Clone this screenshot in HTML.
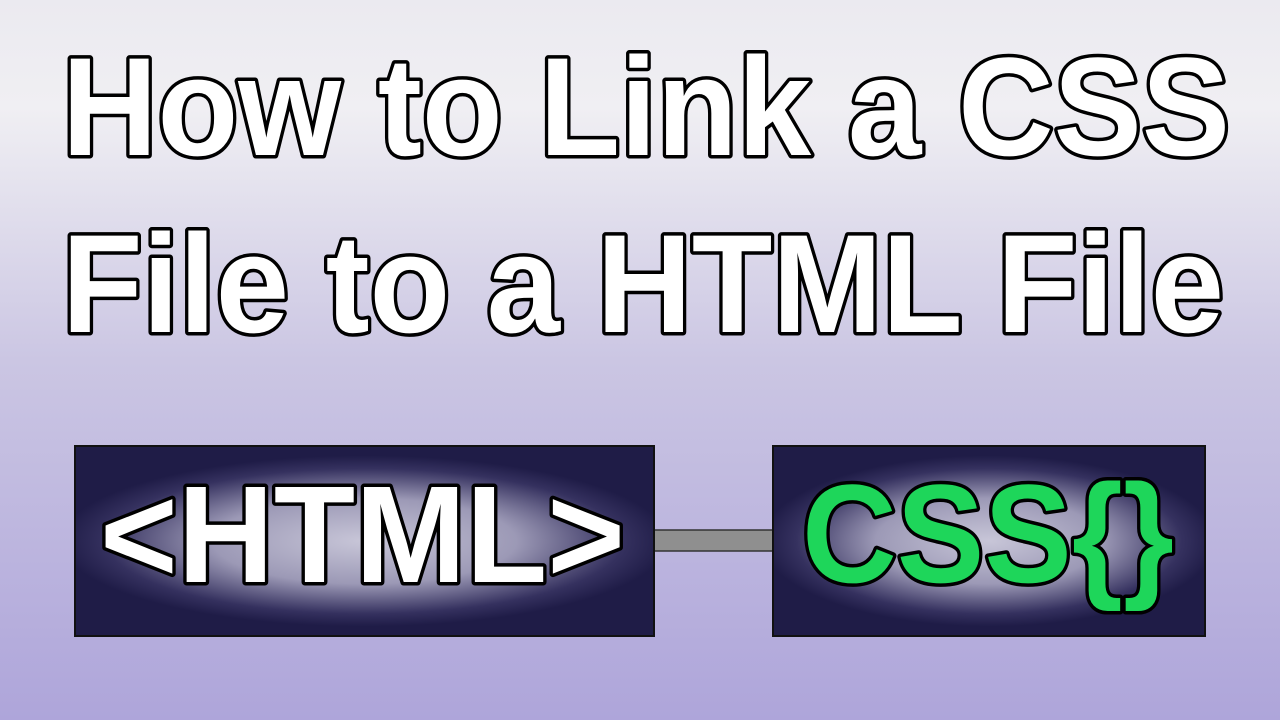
<!DOCTYPE html>
<html><head><meta charset="utf-8"><style>
html,body{margin:0;padding:0;width:1280px;height:720px;overflow:hidden}
svg{display:block}
text{font-family:"Liberation Sans",sans-serif;font-weight:bold;paint-order:stroke fill;stroke:#000;stroke-linejoin:round}
</style></head><body>
<svg width="1280" height="720" viewBox="0 0 1280 720" xmlns="http://www.w3.org/2000/svg">
<defs>
<linearGradient id="bg" x1="0" y1="0" x2="0" y2="1">
<stop offset="0" stop-color="#ebeaf0"/>
<stop offset="0.15" stop-color="#f0eff3"/>
<stop offset="0.5" stop-color="#cbc6e3"/>
<stop offset="1" stop-color="#aea5da"/>
</linearGradient>
<radialGradient id="g1" cx="0.5" cy="0.5" r="0.5" gradientTransform="translate(0.5 0.5) scale(1.05 0.9) translate(-0.5 -0.5)">
<stop offset="0" stop-color="#c8c6d8"/>
<stop offset="0.5" stop-color="#9c99b6"/>
<stop offset="0.85" stop-color="#35315f"/>
<stop offset="1" stop-color="#1f1c47"/>
</radialGradient>
</defs>
<rect width="1280" height="720" fill="url(#bg)"/>
<text x="62" y="155" font-size="140" fill="#fff" stroke-width="7" textLength="1168" lengthAdjust="spacingAndGlyphs">How to Link a CSS</text>
<text x="62" y="332" font-size="140" fill="#fff" stroke-width="7" textLength="1162" lengthAdjust="spacingAndGlyphs">File to a HTML File</text>
<rect x="652" y="530" width="122" height="21" fill="#8f8f8f" stroke="#333" stroke-width="1.5"/>
<rect x="75" y="446" width="579" height="190" fill="url(#g1)" stroke="#111" stroke-width="2"/>
<rect x="773" y="446" width="432" height="190" fill="url(#g1)" stroke="#111" stroke-width="2"/>
<text x="100" y="582" font-size="138" fill="#fff" stroke-width="7" textLength="525" lengthAdjust="spacingAndGlyphs">&lt;HTML&gt;</text>
<text x="802" y="582" font-size="140" fill="#1ed65a" stroke-width="7" textLength="372" lengthAdjust="spacingAndGlyphs">CSS{}</text>
</svg>
</body></html>
